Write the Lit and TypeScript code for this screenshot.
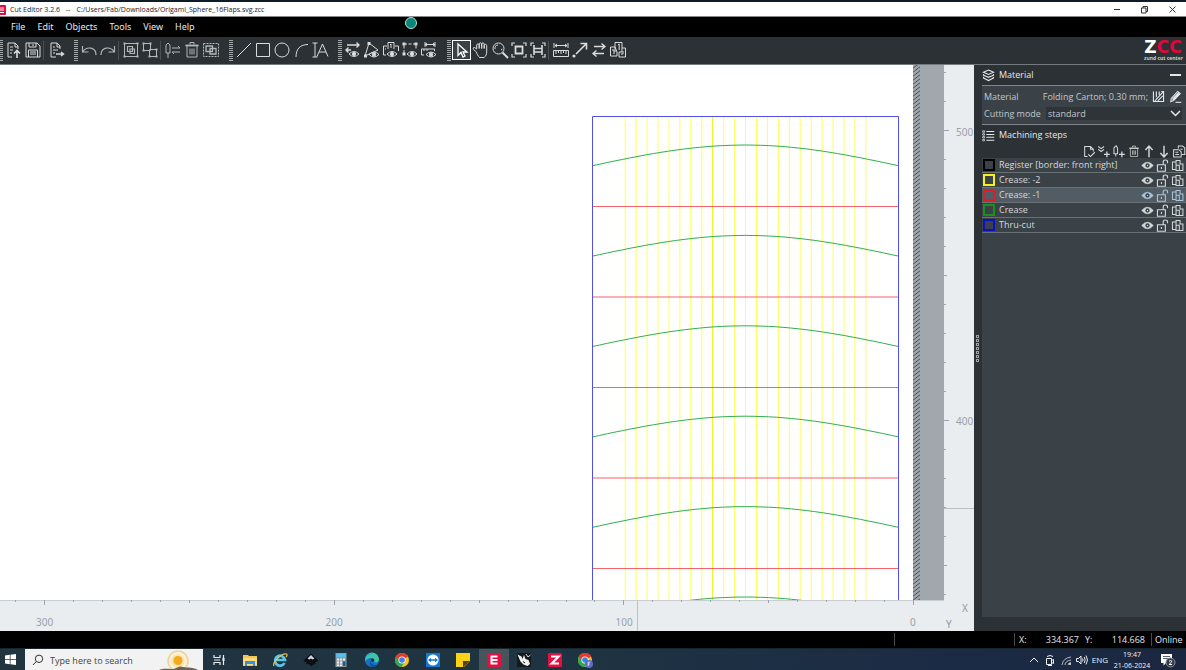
import { LitElement, html, svg, css, type TemplateResult, type SVGTemplateResult } from "lit";
import { customElement, property, state } from "lit/decorators.js";
import { classMap } from "lit/directives/class-map.js";

const icons: Record<string, SVGTemplateResult> = {
  open: svg`<path d="M7 16H3V2h7l3 3v3M10 2v4h3M5 6h3M5 9h3M5 12h2"/><path d="M12 17v-7M9 12.500l3-3 3 3" stroke-width="1.600"/>`,
  save: svg`<path d="M2 2h11l3 3v11H2z"/><path d="M5 2v4h7V2M4.500 16V9h9v7M6 11h6M6 13h6"/><path d="M9 3v2"/>`,
  exportDoc: svg`<path d="M13 8V5l-3-3H4v14h5M10 2v4h3M6 6h2M6 9h5M6 12h2"/><path d="M9 13h7M14 11l2.500 2-2.500 2" stroke-width="1.500"/>`,
  undo: svg`<path d="M2.500 5v6h6M3 10.500c4-5.500 13-4.500 13 3.500" stroke-width="1.200"/>`,
  redo: svg`<path d="M15.500 5v6h-6M15 10.500C11 5 2 6 2 14" stroke-width="1.200"/>`,
  group: svg`<path d="M2.500 2.500h13v13h-13z"/><path d="M5.500 5.500h5v5h-5zM8 8h4.500v4.500H8z" stroke-width="1.200"/><path d="M1.500 1.500h2v2h-2zM14.500 1.500h2v2h-2zM1.500 14.500h2v2h-2zM14.500 14.500h2v2h-2z" fill="currentColor" stroke="none"/>`,
  ungroup: svg`<path d="M2.500 2.500h7v7h-7zM8.500 8.500h7v7h-7z"/><path d="M1.500 1.500h2v2h-2zM8.500 1.500h2v2h-2zM1.500 8.500h2v2h-2zM14.500 7.500h2v2h-2zM14.500 14.500h2v2h-2zM7.500 14.500h2v2h-2z" fill="currentColor" stroke="none"/>`,
  knifeSwap: svg`<path d="M2 4l2-2 2 2v8H2zM4 12v5M8 7h8M14 5l2 2M8 11h8M10 13l-2-2"/>`,
  trash: svg`<path d="M2.500 4.500h13" stroke-width="1.800"/><path d="M7 3.500v-2h4v2M4 5v11h10V5M7 7.500v6M9 7.500v6M11 7.500v6"/>`,
  groupDash: svg`<path d="M1.500 2.500h15v13h-15z" stroke-dasharray="2 1"/><path d="M4 5h6.500v5.500H4zM8 7.500h6V13H8z" stroke-width="1.300"/>`,
  line: svg`<path d="M2 16L16 2"/>`,
  rect: svg`<path d="M2.500 2.500h13v13h-13z"/>`,
  circle: svg`<circle cx="9" cy="9" r="7"/>`,
  arc: svg`<path d="M4 16C4 8 8 3.500 16 3.500"/>`,
  text: svg`<path d="M1.500 2h5M4 2v14M1.500 16h5"/><path d="M6 15.500L11.500 3l5.500 12.500M8 11h7"/>`,
  eyeSwap: svg`<path d="M3 4h12M12.500 1.500L15 4l-2.500 2.500M2 9h5M4.500 6.500L2 9l2.500 2.500" stroke-width="1.400"/><path d="M5 13q5-5 10 0-5 5-10 0z"/><circle cx="10" cy="13" r="1.700" fill="currentColor"/>`,
  eyeNode: svg`<path d="M2 15L6 2l9 7M2 15l13-6"/><path d="M4.500 1h3v3h-3zM1 13.500h3v3H1z" fill="currentColor" stroke="none"/><path d="M6 13.500q5-5 10 0-5 5-10 0z"/><circle cx="11" cy="13.500" r="1.700" fill="currentColor"/>`,
  eyeCards: svg`<path d="M6 8V1.500h6V8M9 3v4M8 4l1-1M5 5H1.500v9H4M4 8h-1M13 5h3.500v5"/><path d="M5 13q5-5 10 0-5 5-10 0z"/><circle cx="10" cy="13" r="1.700" fill="currentColor"/>`,
  eyePath: svg`<path d="M3 12V3h12v6" stroke-dasharray="3 1.500"/><path d="M1.500 1.500h3v3h-3zM13.500 1.500h3v3h-3zM1.500 11.500h3v3h-3z" fill="currentColor" stroke="none"/><path d="M6 13q5-5 10 0-5 5-10 0z"/><circle cx="11" cy="13" r="1.700" fill="currentColor"/>`,
  eyeMeasure: svg`<path d="M5 1v5M15 1v5M5 3.500h10M7 2L5 3.500 7 5M13 2l2 1.500L13 5M1.500 8v6H4M1.500 8h13v2M4 8v2M7 8v2"/><path d="M6 13.500q5-5 10 0-5 5-10 0z"/><circle cx="11" cy="13.500" r="1.700" fill="currentColor"/>`,
  pointer: svg`<path d="M5 3v11.500l3-3 2 4.500 2-1-2-4h4z" stroke-width="1.300"/>`,
  hand: svg`<path d="M4.500 11L1.500 8.500c-.800-1.500.200-2.500 1.200-2l2 1.500V4c0-1.500 2.500-1.500 2.500 0v3.500V3c0-1.500 2.500-1.500 2.500 0v4.500V3c0-1.500 2.500-1.500 2.500 0v4.500V4.500c0-1.500 2.500-1.500 2.500 0V11c0 2.500-1 4-2.500 5.500H7.500c-1-1.500-3-3.500-3-5.500"/>`,
  zoom: svg`<circle cx="7.500" cy="7.500" r="5.500"/><path d="M4 8a3.500 3.500 0 0 1 3-4M10 9l1.500-1"/><path d="M11.500 11.500L17 17" stroke-width="2"/>`,
  fitAll: svg`<path d="M2 5V2h3M13 2h3v3M16 13v3h-3M5 16H2v-3" stroke-width="1.200"/><path d="M5.500 5.500h7v7h-7z" stroke-width="1.800"/>`,
  fitSel: svg`<path d="M2 5V2h3M13 2h3v3M16 13v3h-3M5 16H2v-3" stroke-width="1.200"/><path d="M5 4v10M13 4v10M5 7.500h8M5 11h8" stroke-width="1.600"/>`,
  measure: svg`<path d="M2 2v5M16 2v5M3 4.500h12M5 3L3 4.500 5 6M13 3l2 1.500L13 6M1.500 9.500h15v6h-15zM4 10v3M6.500 10v2M9 10v3M11.500 10v2M14 10v3"/>`,
  vector: svg`<path d="M5 13L15 3M9.500 2.500h6v6" stroke-width="1.600"/><circle cx="3" cy="15" r="1.600" fill="currentColor" stroke="none"/>`,
  swap: svg`<path d="M4 5.500h11M11.500 2.500l3.500 3-3.500 3M14 12.500H3M6.500 9.500l-3.500 3 3.500 3" stroke-width="1.400"/>`,
  cards: svg`<path d="M6 11V1.500h7V11M9 4l1.200-1v6M6 6H1.500v9H8V11zM10 11v5h6.500V7H13M3 9h2v4M12 13h2v-3M10 11h3"/>`,
  layers: svg`<path d="M9 1.500l7 3-7 3-7-3zM2.500 7L2 8.500l7 3 7-3-.500-1.500M2.500 11L2 12.500l7 3.500 7-3.500-.500-1.500" stroke-width="1.500"/>`,
  list: svg`<path d="M6 3.500h11M6 7.500h11M6 11.500h11M6 15.500h11" stroke-width="1.500"/><path d="M1 2.500h2.500v2H1zM1 6.500h2.500v2H1zM1 10.500h2.500v2H1zM1 14.500h2.500v2H1z"/>`,
  hatch: svg`<path d="M2 2v14h14V2h-3" stroke-width="1.500"/><path d="M6 2v8M10 2v5M4 15L16 2M8 15l7-7" stroke-width="1.500"/>`,
  edit: svg`<path d="M3 12L12 2l3.500 3-9 9.500L2.500 16z" stroke-width="1.500"/><path d="M6 14.500l9-9L13 3.500 5 12z" fill="currentColor"/><path d="M9 17h8" stroke-width="1.500"/>`,
  docCheck: svg`<path d="M7 16H3V2h8l4 4v3M11 2v4h4" stroke-width="1.400"/><path d="M8 13l3 3 6-6" stroke-width="1.600"/>`,
  chevAdd: svg`<path d="M1 2l4 3 4-3M1 6l4 3 4-3" stroke-width="1.500"/><path d="M13 9v8M9 13h8" stroke-width="1.800"/>`,
  knifeAdd: svg`<path d="M2 4l3-3 2 3v8H2zM4.500 12v4" stroke-width="1.400"/><path d="M13 9v8M9 13h8" stroke-width="1.800"/>`,
  up: svg`<path d="M9 17V2M4 7l5-5.500L14 7" stroke-width="2"/>`,
  down: svg`<path d="M9 1v15M4 11l5 5.500L14 11" stroke-width="2"/>`,
  copyDoc: svg`<path d="M8 5V1.500h6L17 4v9h-4M1.500 6.500H9l3 3v7H1.500zM4 10h4M4 13h5M11 6h3" stroke-width="1.400"/>`,
  eye: svg`<path d="M1 9q8-9 16 0-8 9-16 0z" fill="currentColor"/><circle cx="9" cy="9" r="3" fill="#3a4147" stroke="none"/><circle cx="9" cy="9" r="1" fill="currentColor" stroke="none"/>`,
  unlock: svg`<path d="M2 8h11v9H2zM10 8V4c0-3.500 6-3.500 6 0v2M7.500 11v3" stroke-width="1.500"/>`,
  link: svg`<path d="M7 8V2h5.500v5M7 4H2v10.500h5M7 8.500h4.500V16H7zM12 7h4.500v9H12" stroke-width="1.400"/>`,
};

const icon = (name: string) =>
  html`<svg class="ico" viewBox="0 0 18 18" aria-hidden="true">${icons[name]}</svg>`;

const iconCss = css`
  .ico { display: block; fill: none; stroke: currentColor; stroke-width: 1; }
  button { border: 0; padding: 0; margin: 0; background: none; color: inherit; font: inherit; }
`;

/* ---------- tool bar ---------- */
const toolGroups: string[][] = [
  ["open", "save", "|", "exportDoc"],
  ["undo", "redo", "|", "group", "ungroup", "|", "knifeSwap", "trash", "groupDash"],
  ["line", "rect", "circle", "arc", "text"],
  ["eyeSwap", "eyeNode", "eyeCards", "eyePath", "eyeMeasure"],
  ["pointer", "hand", "zoom", "fitAll", "fitSel", "|", "measure", "vector", "swap", "cards"],
];

@customElement("tool-bar")
class ToolBar extends LitElement {
  @state() private active = "pointer";
  static styles = [iconCss, css`
    :host { display: flex; align-items: center; justify-content: space-between; height: 26px;
      background: #2b3134; color: #d9dbdc; border-bottom: 1px solid #747b7f; padding-right: 4px; padding-bottom: 1px; }
    .groups { display: flex; gap: 9px; margin-left: -1px; }
    .group { display: flex; align-items: center; }
    .grip { width: 4px; height: 21px; margin-right: 1px;
      background: repeating-linear-gradient(#a2a7a9 0 1px, #2b3134 1px 2px); }
    .sep { width: 1px; height: 19px; margin: 0 2px 0 1px; background: #4a5053; }
    button { width: 19px; height: 20px; display: grid; place-items: center; }
    button.dim { color: #b2b6b8; }
    button.on { box-shadow: inset 0 0 0 1px #fff; background: #3b4245; color: #fff; }
    .ico { width: 18px; height: 18px; }
    .logo { width: 38px; font-family: "DejaVu Sans", sans-serif; text-align: center; }
    .name { font-size: 17px; line-height: 16px; font-weight: 700; color: #fff; }
    .name span { color: #e2063a; }
    .sub { font-size: 5px; line-height: 6px; font-weight: 700; color: #c9cccd; font-family: "Open Sans", sans-serif; white-space: nowrap; }
  `];
  render() {
    const dim = new Set(["undo", "redo", "group", "ungroup", "knifeSwap", "trash", "groupDash"]);
    return html`
      <div class="groups">${toolGroups.map(g => html`<div class="group" role="toolbar"><span class="grip"></span>
        ${g.map(n => n === "|" ? html`<span class="sep"></span>` : html`<button aria-label=${n}
          class=${classMap({ on: n === this.active, dim: dim.has(n) })}
          @click=${() => (this.active = n)}>${icon(n)}</button>`)}</div>`)}</div>
      <div class="logo"><div class="name">Z<span>CC</span></div><div class="sub">zund cut center</div></div>`;
  }
}

/* ---------- drawing area ---------- */
@customElement("cut-canvas")
class CutCanvas extends LitElement {
  static styles = css`
    :host { display: block; min-width: 0; overflow: hidden; background: #e9edf0; }
    svg { display: block; width: 100%; height: 100%; }
    .lbl { font: 10px "Noto Sans", sans-serif; fill: #98a2a9; }
    .axis { font: 10px "Noto Sans", sans-serif; fill: #8d979f; }
    .tick { stroke: #9aa4ab; }
    .yellow { stroke: #ffff00; stroke-opacity: 0.65; }
    .yellow.strong { stroke: #f2ee00; stroke-opacity: 1; }
    .red { stroke: #f23b46; stroke-opacity: 0.8; }
    .green { stroke: #2fb04a; fill: none; }
    .blue { stroke: #4f4ff0; fill: none; }
  `;
  private curve(peak: number) {
    const pts: string[] = [];
    for (let i = -20; i <= 20; i++) {
      const u = i / 20;
      pts.push(`${(745.5 + u * 153.5).toFixed(1)},${(peak + 20.8 * (1 - Math.cos((Math.PI * u) / 2))).toFixed(1)}`);
    }
    return svg`<polyline class="green" points=${pts.join(" ")} />`;
  }
  render() {
    const n = (k: number) => Array.from({ length: k }, (_, i) => i);
    return html`<svg viewBox="0 65 974 566" preserveAspectRatio="xMaxYMin slice" role="img" aria-label="Cut layout">
      <defs>
        <pattern id="hatch" width="7" height="4" patternUnits="userSpaceOnUse" x="913">
          <rect width="7" height="4" fill="#a0a7ad"/><path d="M-1 5L8 -2M-1 9L8 2M-1 1L8 -6" stroke="#3c4146" stroke-width="0.9"/>
        </pattern>
        <clipPath id="work"><rect x="0" y="65" width="944" height="535"/></clipPath>
      </defs>
      <rect x="0" y="65" width="913" height="535" fill="#fff"/>
      <rect x="920" y="65" width="24" height="535" fill="#a0a7ad"/>
      <rect x="913" y="65" width="7" height="535" fill="url(#hatch)"/>
      <g clip-path="url(#work)">
        ${n(23).map(i => svg`<path class=${i === 8 ? "yellow strong" : "yellow"} d="M${(625.2 + i * 10.94).toFixed(1)} 116V600" />`)}
        ${n(5).map(i => svg`<path class="red" d="M592 ${(206.5 + i * 90.5).toFixed(1)}H899" />`)}
        ${n(6).map(i => this.curve(145 + i * 90.4))}
        <path class="blue" d="M592.5 600V116.500H898.500V600"/>
      </g>
      <path d="M0 600.500H944" stroke="#c9ced2"/>
      ${n(33).map(i => {
        const x = Math.round(912.9 - i * 28.95) + 0.5;
        return svg`<path class="tick" d="M${x} 600v${i % 10 === 0 ? 5 : i % 5 === 0 ? 3 : 2}" />`;
      })}
      ${n(19).map(i => {
        const y = Math.round(72 + i * 29) + 0.5;
        return svg`<path class="tick" d="M944 ${y}h${i % 10 === 2 ? 5 : i % 10 === 7 ? 3 : 2}" />`;
      })}
      <path d="M637.500 600V631M944 508.500H974" stroke="#b9c1c6"/>
      <text class="lbl" x="36" y="625.5">300</text>
      <text class="lbl" x="325.500" y="625.5">200</text>
      <text class="lbl" x="615.500" y="625.5">100</text>
      <text class="lbl" x="910" y="625.5">0</text>
      <text class="lbl" x="956" y="135.5">500</text>
      <text class="lbl" x="956" y="424.5">400</text>
      <text class="axis" x="962" y="612">X</text>
      <text class="axis" x="946" y="628">Y</text>
    </svg>`;
  }
}

/* ---------- side panel ---------- */
interface Step { name: string; color: string; }

@customElement("side-panel")
class SidePanel extends LitElement {
  @property({ type: Array }) steps: Step[] = [
    { name: "Register [border: front right]", color: "#000" },
    { name: "Crease: -2", color: "#f4ee22" },
    { name: "Crease: -1", color: "#d3202b" },
    { name: "Crease", color: "#1b8f22" },
    { name: "Thru-cut", color: "#0a10c4" },
  ];
  @state() private selected = 2;
  static styles = [iconCss, css`
    :host { display: flex; background: #2b3134; color: #d6d9da; font: 9px/14px "Open Sans", sans-serif; }
    .split { width: 8px; display: grid; place-content: center; }
    .grip { display: flex; flex-direction: column; gap: 1px; margin-right: 2px; }
    .grip i { width: 3px; height: 3px; box-sizing: border-box; border: 1px solid #9ca2a5; }
    .body { flex: 1; min-width: 0; display: flex; flex-direction: column; margin-bottom: 14px; overflow: hidden; white-space: nowrap; }
    h2 { display: flex; align-items: center; gap: 4px; height: 20px; margin: 0; font: inherit; color: #e6e8e9; }
    h2 .ico { width: 13px; height: 13px; }
    .min { margin-left: auto; margin-right: 5px; width: 11px; height: 12px; display: grid; align-items: center; }
    .min i { display: block; height: 2px; background: #e4e6e7; }
    .mat { background: #3a4147; border-top: 1px solid #80868a; border-bottom: 1px solid #80868a; padding: 2px 4px 2px 2px; color: #c3c7c9; }
    .line { display: flex; align-items: center; justify-content: space-between; height: 17px; }
    .val { display: flex; align-items: center; gap: 4px; }
    .val .ico { width: 13px; height: 13px; }
    .val button { color: #e6e8e9; }
    .mode { position: relative; display: flex; width: 136px; color: #c3c7c9; }
    select { appearance: none; width: 100%; height: 13px; border: 0; padding: 0 2px; background: #2e3438; color: inherit; font: inherit; line-height: 13px; }
    .chev { position: absolute; right: 1px; top: 3px; width: 11px; height: 7px; fill: none; stroke: #e6e8e9; stroke-width: 1.5px; pointer-events: none; }
    .acts { display: flex; justify-content: flex-end; height: 13px; align-items: flex-start; }
    .acts button, .row button { width: 15px; display: grid; place-items: center; }
    .acts .ico { width: 14px; height: 13px; }
    .list { flex: 1; background: #3a4147; margin: 0; padding: 0; list-style: none; }
    .row { display: flex; align-items: center; height: 15px; box-sizing: border-box; border-bottom: 1px solid #697075; padding-right: 1px; }
    .row.on { background: #525c65; }
    .row.on button { color: #a9c6dc; }
    .row.on button.name { color: inherit; }
    .row .ico { width: 13px; height: 13px; }
    .swatch { width: 12px; height: 12px; box-sizing: border-box; border: 2px solid; margin: 0 4px 0 1px; }
    .row .name { flex: 1; width: auto; display: block; text-align: left; line-height: 14px; }
  `];
  render() {
    return html`
      <div class="split"><div class="grip">${Array.from({ length: 7 }, () => html`<i></i>`)}</div></div>
      <div class="body">
        <h2>${icon("layers")}Material<button class="min" aria-label="Collapse"><i></i></button></h2>
        <div class="mat">
          <div class="line"><span>Material</span>
            <span class="val">Folding Carton; 0.30 mm;<button aria-label="Flute">${icon("hatch")}</button><button aria-label="Edit material">${icon("edit")}</button></span></div>
          <div class="line"><label for="mode">Cutting mode</label>
            <span class="mode"><select id="mode"><option>standard</option></select>
              <svg class="chev" viewBox="0 0 11 7"><path d="M1 1l4.500 4.500L10 1"/></svg></span></div>
        </div>
        <h2>${icon("list")}Machining steps</h2>
        <div class="acts">${["docCheck", "chevAdd", "knifeAdd", "trash", "up", "down", "copyDoc"].map(n =>
          html`<button aria-label=${n}>${icon(n)}</button>`)}</div>
        <ul class="list">${this.steps.map((s, i) => html`
          <li class=${classMap({ row: true, on: i === this.selected })}>
            <span class="swatch" style="border-color:${s.color}"></span>
            <button class="name" @click=${() => (this.selected = i)}>${s.name}</button>
            ${["eye", "unlock", "link"].map(n => html`<button aria-label=${n}>${icon(n)}</button>`)}
          </li>`)}</ul>
      </div>`;
  }
}

/* ---------- task bar ---------- */
const chrome = svg`<circle cx="8" cy="8" r="7" fill="#fbc116"/><path d="M8 8L1.900 4.500A7 7 0 0 1 14.100 4.500z" fill="#e33b2e"/><path d="M8 8L1.900 4.500A7 7 0 0 0 7.500 15L11 9z" fill="#2da94f"/><path d="M8 4.500h6.100a7 7 0 0 0-12.200 0L5 9z" fill="#e33b2e"/><circle cx="8" cy="8" r="3.600" fill="#fff"/><circle cx="8" cy="8" r="2.800" fill="#3f7fe8"/>`;

const apps: { name: string; on?: boolean; art: SVGTemplateResult }[] = [
  { name: "Task view", art: svg`<path d="M3 3v2.500h6V3M3 13v-2.500h6V13M3 8h6" fill="none" stroke="#e8ecee" stroke-width="1.200"/><path d="M12.500 3v10" stroke="#e8ecee" stroke-width="1.200"/><path d="M11.500 6h2v3h-2z" fill="#e8ecee"/>` },
  { name: "File Explorer", art: svg`<path d="M1 3h5l1 1h8v10H1z" fill="#f3c74f"/><path d="M1 6h14v7H1z" fill="#fbdc7c"/><path d="M3 9h10v5h-2v-2H5v2H3z" fill="#3f8fd8"/>` },
  { name: "Internet Explorer", art: svg`<path d="M12.500 11A5 5 0 1 1 13 8H4" fill="none" stroke="#59c6ee" stroke-width="2.600"/><path d="M2 14C0 11 9 1 14.500 2c1 .500.500 2-.500 3" fill="none" stroke="#e8c04c" stroke-width="1.200"/>` },
  { name: "Inkscape", art: svg`<path d="M8 1.500l7 6.500c1 1.500-2 2-3 2l1 2-3 .500-1.500 2-2-2L3 12l.500-2C2 10 0 9.500 1 8z" fill="#0b0e12"/><path d="M8 3l3.500 3.500-2 1L8 6.500l-1.500 1-2-1z" fill="#cfd6db"/>` },
  { name: "Calculator", art: svg`<path d="M2.500 1h11v14h-11z" fill="#8f9ba3"/><path d="M3.500 2h9v3h-9z" fill="#4fc4f2"/><path d="M4 6.500h2v2H4zM7 6.500h2v2H7zM10 6.500h2v2h-2zM4 9.500h2v2H4zM7 9.500h2v2H7zM4 12.500h2v1.500H4zM7 12.500h2v1.500H7z" fill="#e9eef1"/><path d="M10 9.500h2.500V14H10z" fill="#1c5a96"/>` },
  { name: "Edge", art: svg`<circle cx="8" cy="8" r="7" fill="#1673c8"/><path d="M1 8a7 7 0 0 1 14-1c.300 3-2.500 4-5 3 1-1.500 0-4-2.500-4C4 6 1.500 8 1 10z" fill="#3cc5a0"/><path d="M1 8a7 7 0 0 1 9-6.700C5 2 2 5 1 8z" fill="#2fa5df"/><path d="M6.500 9c0 3 3 5 7 3.500A7 7 0 0 1 9 15C6 14 5 11 6.500 9z" fill="#0f4f9c"/><circle cx="8.600" cy="8.200" r="1.600" fill="#21343f"/>` },
  { name: "Chrome", art: chrome },
  { name: "TeamViewer", art: svg`<rect x="1" y="1" width="14" height="14" fill="#1377d4"/><circle cx="8" cy="8" r="5.600" fill="#fff"/><path d="M3 8l3-2.300v1.500h4V5.700L13 8l-3 2.300V8.800H6v1.500z" fill="#1377d4"/>` },
  { name: "Sticky Notes", art: svg`<path d="M1 1h14v14H1z" fill="#fcd116"/><path d="M8 9h7l-6.500 6H8z" fill="#51430f"/><path d="M15 9v6H9z" fill="#23353f"/>` },
  { name: "Cut Editor", on: true, art: svg`<rect x="1" y="1" width="14" height="14" rx="1" fill="#e20f3f"/><path d="M4.500 4.500h7M4.500 8h7M4.500 11.500h7M5.500 4v8" stroke="#fff" stroke-width="2"/>` },
  { name: "Rhino", art: svg`<rect x="1" y="1" width="14" height="14" fill="#15181a"/><path d="M1.500 2.500l4 2 1 2.500 1.500-4 1.500 4 3 1 1.500 4-2.500 2-4-1.500-3-3z" fill="#eef0f1"/><path d="M10 2l2 3 2.500-2" fill="none" stroke="#d9dcdd"/><path d="M7 9.500l2 1.500" stroke="#15181a"/>` },
  { name: "Cut Center", art: svg`<rect x="1" y="1" width="14" height="14" rx="1" fill="#e20f3f"/><path d="M4 4.500h7.500L4.800 11.500H12" fill="none" stroke="#fff" stroke-width="2.200"/>` },
  { name: "Chrome profile", art: svg`${chrome}<circle cx="12" cy="12" r="4" fill="#5a6cc4"/><path d="M11.200 14.200V10.200h2M11.200 12h1.600" fill="none" stroke="#e8ebff" stroke-width=".9"/>` },
];

@customElement("task-bar")
class TaskBar extends LitElement {
  static styles = [iconCss, css`
    :host { display: flex; align-items: stretch; height: 22px; overflow: hidden; color: #eef1f3;
      background: linear-gradient(90deg, #20353f, #1f3442 45%, #1b2b45 80%, #1b2740); border-top: 1px solid #17252c; box-sizing: border-box;
      font: 8px/11px "Open Sans", sans-serif; }
    .start { width: 25px; padding-right: 4px; display: grid; place-items: center; }
    .search { display: flex; align-items: center; width: 178px; background: #f2f2f2; color: #333; overflow: hidden; }
    .search label { display: grid; margin-left: 7px; }
    .search input { flex: 1; min-width: 0; border: 0; padding: 2px 0 0 6px; background: none; font: 9px/16px "Open Sans", sans-serif; color: #333; outline: 0; }
    .search input::placeholder { color: #444; opacity: 1; }
    .art { width: 46px; height: 22px; }
    .apps { display: flex; justify-content: space-between; width: 396px; margin-left: 1px; }
    .apps button { width: 30px; display: grid; place-items: center; }
    .apps button.on { background: #46545c; }
    .apps svg { width: 16px; height: 16px; }
    .tray { display: flex; align-items: center; gap: 4px; margin-left: auto; padding-right: 9px; }
    .tray svg { display: block; width: 12px; height: 12px; fill: none; stroke: currentColor; }
    .clock { font-size: 7px; width: 40px; text-align: center; margin: 0 3px 0 0; }
    .tray .note { width: 18px; height: 16px; }
  `];
  render() {
    return html`
      <button class="start" aria-label="Start"><svg width="11" height="11" viewBox="0 0 11 11"><path d="M0 1.500L4.800.800V5.200H0zM5.500.700L11 0v5.200H5.500zM0 5.900h4.800v4.400L0 9.600zM5.500 5.900H11V11l-5.500-.800z" fill="#fff"/></svg></button>
      <div class="search">
        <label for="q" aria-label="Search"><svg width="12" height="12" viewBox="0 0 12 12" fill="none" stroke="#333"><circle cx="7" cy="4.800" r="3.700"/><path d="M4.300 7.500L1 11"/></svg></label>
        <input id="q" placeholder="Type here to search">
        <svg class="art" viewBox="0 0 46 22"><circle cx="21" cy="12" r="10" fill="#fbf1da" stroke="#ecd49b" stroke-width="1.500"/><circle cx="21" cy="12" r="6.500" fill="#fae3a4"/><circle cx="21" cy="11.500" r="4.500" fill="#f5a91c"/><path d="M0 22c5-3 10-2 14-2 6 0 8-4 12-2 5 1 12 0 16 4z" fill="#6d625a"/></svg>
      </div>
      <div class="apps">${apps.map(a => html`<button aria-label=${a.name} class=${classMap({ on: !!a.on })}><svg viewBox="0 0 16 16">${a.art}</svg></button>`)}</div>
      <div class="tray">
        <svg viewBox="0 0 12 12"><path d="M2 8l4-4 4 4"/></svg>
        <svg viewBox="0 0 12 12"><path d="M3 2.500q3-2 6 0M2.500 4.500h5v6h-5zM7.500 6.500l2-1v4l-2-1M4 11.500h4"/></svg>
        <svg viewBox="0 0 12 12"><path d="M2 11Q3 4 11 3M5 11q0-4 6-5M8 11q0-2 3-2.500" stroke-opacity=".7"/><circle cx="10" cy="10" r="1" fill="currentColor" stroke="none"/></svg>
        <svg viewBox="0 0 12 12"><path d="M.500 4.500h2L5 2v8L2.500 7.500h-2zM6.500 4.500q1 1.500 0 3M8.200 3q2 3 0 6M10 1.500q3 4.500 0 9"/></svg>
        <span>ENG</span>
        <div class="clock"><div>19:47</div><div>21-06-2024</div></div>
        <svg class="note" viewBox="0 0 18 16"><path d="M2 2h11v9H7l-2.500 2.500V11H2z" fill="#fff" stroke="none"/><path d="M4 4.500h7M4 6.500h7" stroke="#56616e"/><circle cx="11.500" cy="10.500" r="4.500" fill="#333c48" stroke="#8c949c"/><path d="M10 9.300q1.500-1.500 2.800-.200 0 1.300-2.800 3.400H13" stroke="#fff"/></svg>
      </div>`;
  }
}

/* ---------- application ---------- */
@customElement("app-root")
class AppRoot extends LitElement {
  static styles = [iconCss, css`
    :host { display: flex; flex-direction: column; height: 100vh; overflow: hidden; background: #000; font-family: "Open Sans", sans-serif; }
    .title { display: flex; align-items: center; height: 17px; box-sizing: border-box; background: #fff; border-top: 2px solid #0d1b26; border-bottom: 1px solid #888;
      color: #222; font-size: 7px; line-height: 12px; white-space: pre; padding-top: 1px; }
    .badge { width: 6px; height: 10px; margin-right: 4px; }
    .title span + span { margin-left: 6px; }
    .win { display: flex; margin-left: auto; }
    .win button { width: 28px; display: grid; place-items: center; }
    .win svg { width: 9px; height: 9px; fill: none; stroke: #333; }
    nav { position: relative; display: flex; align-items: center; gap: 12px; height: 20px; padding-left: 11px; color: #e8e8e8; font: 9px/18px "Noto Sans", sans-serif; }
    .dot { position: absolute; left: 405px; top: 0; width: 10px; height: 10px; border-radius: 50%; background: #0b8577; border: 1px solid #b5e0da; }
    main { flex: 1; min-height: 0; display: grid; grid-template-columns: minmax(0, 1fr) 212px; }
    footer { display: flex; justify-content: flex-end; align-items: center; height: 17px; color: #e6e6e6; font-size: 9px; line-height: 16px; }
    footer > div { height: 13px; line-height: 13px; border-left: 1px solid #4a4a4a; box-sizing: border-box; }
    .blank { width: 120px; }
    .coords { display: flex; width: 137px; padding: 0 6px 0 4px; justify-content: space-between; }
    .online { width: 35px; padding-left: 3px; }
    .coords b { font-weight: 400; width: 60px; display: flex; justify-content: space-between; }
  `];
  render(): TemplateResult {
    return html`
      <header class="title">
        <svg class="badge" viewBox="0 0 6 10"><path d="M0 0h5q1 0 1 1v8q0 1-1 1H0z" fill="#e20f3f"/><path d="M0 3h4M0 5h4M0 7.500h4" stroke="#fff"/></svg>
        <span>Cut Editor 3.2.6</span><span>--</span><span>C:/Users/Fab/Downloads/Origami_Sphere_16Flaps.svg.zcc</span>
        <div class="win">
          <button aria-label="Minimize"><svg viewBox="0 0 9 9"><path d="M2 4.500h6"/></svg></button>
          <button aria-label="Restore"><svg viewBox="0 0 9 9"><path d="M1.500 3h4.500v5H1.500zM3 3V1.500h4.500V6.500H6"/></svg></button>
          <button aria-label="Close"><svg viewBox="0 0 9 9"><path d="M1.500 1.500l6 6M7.500 1.500l-6 6"/></svg></button>
        </div>
      </header>
      <nav>${["File", "Edit", "Objects", "Tools", "View", "Help"].map(m => html`<button>${m}</button>`)}<span class="dot"></span></nav>
      <tool-bar></tool-bar>
      <main><cut-canvas></cut-canvas><side-panel></side-panel></main>
      <footer>
        <div class="blank"></div>
        <div class="coords"><b><span>X:</span><span>334.367</span></b><b><span>Y:</span><span>114.668</span></b></div>
        <div class="online">Online</div>
      </footer>
      <task-bar></task-bar>`;
  }
}
